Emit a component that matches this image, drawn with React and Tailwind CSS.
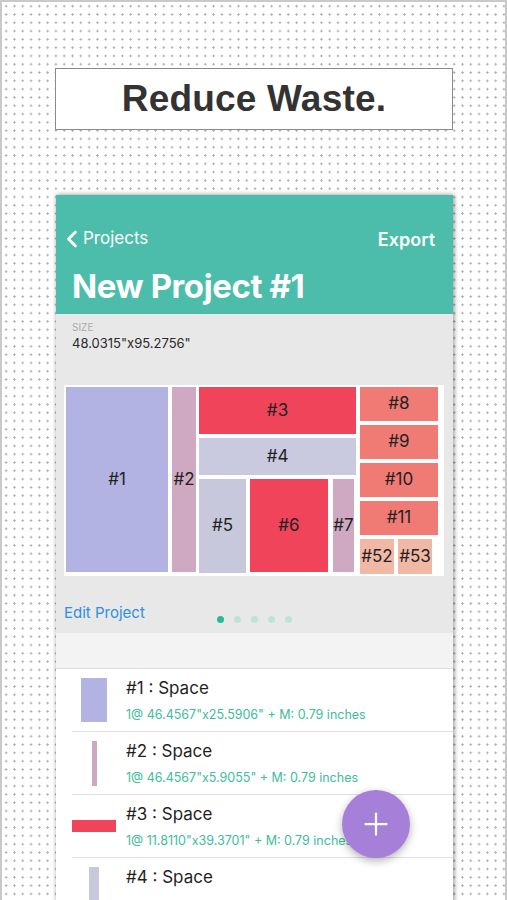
import { ChevronLeft, Plus } from 'lucide-react'

const app = { fontFamily: 'Inter, "Noto Sans", sans-serif' }

function Block({ className, label }) {
  return (
    <div className={`flex items-center justify-center text-[17px] text-[#222] ${className}`}>
      {label}
    </div>
  )
}

// the fourth row's size line falls below the bottom edge of the screenshot
const rows = [
  { name: '#1 : Space', dims: '1@ 46.4567"x25.5906" + M: 0.79 inches', thumb: 'w-[26px] h-[44px] bg-[#b3b3e3]' },
  { name: '#2 : Space', dims: '1@ 46.4567"x5.9055" + M: 0.79 inches', thumb: 'w-[5px] h-[45px] bg-[#cfa9c1]' },
  { name: '#3 : Space', dims: '1@ 11.8110"x39.3701" + M: 0.79 inches', thumb: 'w-[46px] h-[12px] bg-[#ef4459]' },
  { name: '#4 : Space', dims: null, thumb: 'w-[10px] h-[45px] bg-[#c8c8dd]' },
]

export default function App() {
  return (
    <div className="h-[900px] w-[507px] overflow-hidden bg-white border-2 border-b-0 border-[#c9c9c9] bg-[radial-gradient(circle,#b0b0b0_1px,transparent_1.3px)] bg-[length:8.3px_8.3px] bg-[position:0px_0px]">
      {/* headline */}
      <div className="ml-[53px] mt-[66px] w-[398px] h-[62px] bg-white border border-[#8a8a8a] flex items-center justify-center">
        <span className="text-[37px] font-bold text-[#333] tracking-[0.2px]" style={{ fontFamily: '"Liberation Sans", Arial, sans-serif' }}>
          Reduce Waste.
        </span>
      </div>

      {/* phone card */}
      <div className="relative ml-[54px] mt-[65px] w-[397px] h-[720px] bg-white shadow-[1px_0_5px_rgba(0,0,0,0.45)]" style={app}>
        {/* header */}
        <div className="h-[119px] bg-[#4bbdaa] text-white pt-[32px]">
          <div className="flex items-center justify-between pl-[2px] pr-[18px] h-[24px]">
            <div className="flex items-center">
              <ChevronLeft size={28} strokeWidth={2.4} className="-mr-[3px]" />
              <span className="text-[17px]">Projects</span>
            </div>
            <span className="text-[18px] font-semibold">Export</span>
          </div>
          <div className="pl-[16px] mt-[15px] text-[33px] font-bold tracking-[-0.4px] leading-[40px]">New Project #1</div>
        </div>

        {/* preview */}
        <div className="h-[319px] bg-[#e8e8e8] pt-[7px]">
          <div className="pl-[16px] text-[10px] text-[#ababab] leading-[13px]">SIZE</div>
          <div className="pl-[16px] text-[13px] text-[#2a2a2a] leading-[17px] mt-[1px]">48.0315"x95.2756"</div>

          <div className="ml-[8px] mt-[33px] w-[380px] h-[191px] bg-white pt-[2px] pl-[2px] flex">
            <Block className="w-[102px] h-[185px] bg-[#b3b3e3]" label="#1" />
            <Block className="ml-[4px] w-[24px] h-[185px] bg-[#cfa9c1]" label="#2" />
            <div className="ml-[3px] w-[157px] flex flex-col">
              <Block className="h-[47px] bg-[#ef4459]" label="#3" />
              <Block className="mt-[4px] h-[37px] bg-[#c9c9df]" label="#4" />
              <div className="mt-[4px] flex">
                <Block className="w-[47px] h-[94px] bg-[#c8c8dd]" label="#5" />
                <Block className="ml-[4px] w-[78px] h-[93px] bg-[#ef4459]" label="#6" />
                <Block className="ml-[5px] w-[21px] h-[93px] bg-[#cfa9c1]" label="#7" />
              </div>
            </div>
            <div className="ml-[4px] w-[78px] flex flex-col gap-[4px]">
              <Block className="h-[34px] bg-[#f07a74]" label="#8" />
              <Block className="h-[34px] bg-[#f07a74]" label="#9" />
              <Block className="h-[34px] bg-[#f07a74]" label="#10" />
              <Block className="h-[34px] bg-[#f07a74]" label="#11" />
              <div className="flex gap-[4px]">
                <Block className="w-[34px] h-[35px] bg-[#f2b8a6]" label="#52" />
                <Block className="w-[34px] h-[35px] bg-[#f2b8a6]" label="#53" />
              </div>
            </div>
          </div>

          <div className="relative mt-[27px] h-[20px]">
            <span className="absolute left-[8px] top-0 text-[15px] text-[#2f8fe4] leading-[20px]">Edit Project</span>
            <div className="absolute left-[161px] top-[13px] flex gap-[10px]">
              <span className="w-[7px] h-[7px] rounded-full bg-[#2fb597]" />
              <span className="w-[7px] h-[7px] rounded-full bg-[#bfe3da]" />
              <span className="w-[7px] h-[7px] rounded-full bg-[#bfe3da]" />
              <span className="w-[7px] h-[7px] rounded-full bg-[#bfe3da]" />
              <span className="w-[7px] h-[7px] rounded-full bg-[#bfe3da]" />
            </div>
          </div>
        </div>

        {/* band */}
        <div className="h-[36px] bg-[#f3f3f3] border-b border-[#dcdcdc]" />

        {/* list */}
        <div>
          {rows.map((r, i) => (
            <div key={i} className={`ml-[16px] flex h-[63px] items-stretch ${i < rows.length - 1 ? 'border-b border-[#e0e0e0]' : ''}`}>
              <div className="w-[54px] pr-[10px] flex items-center justify-center shrink-0">
                <div className={r.thumb} />
              </div>
              <div className="flex-1">
                <div className="text-[17px] text-[#1f1f1f] leading-[22px] mt-[8px]">{r.name}</div>
                {r.dims && (
                  <div className="text-[12.5px] text-[#3dbd9c] leading-[16px] mt-[8px] whitespace-nowrap">{r.dims}</div>
                )}
              </div>
            </div>
          ))}
        </div>

        {/* add button */}
        <button className="absolute left-[286px] top-[595px] w-[68px] h-[68px] rounded-full bg-[#a67fd8] shadow-[0_3px_8px_rgba(0,0,0,0.3)] flex items-center justify-center text-white">
          <Plus size={36} strokeWidth={1.5} />
        </button>
      </div>
    </div>
  )
}
